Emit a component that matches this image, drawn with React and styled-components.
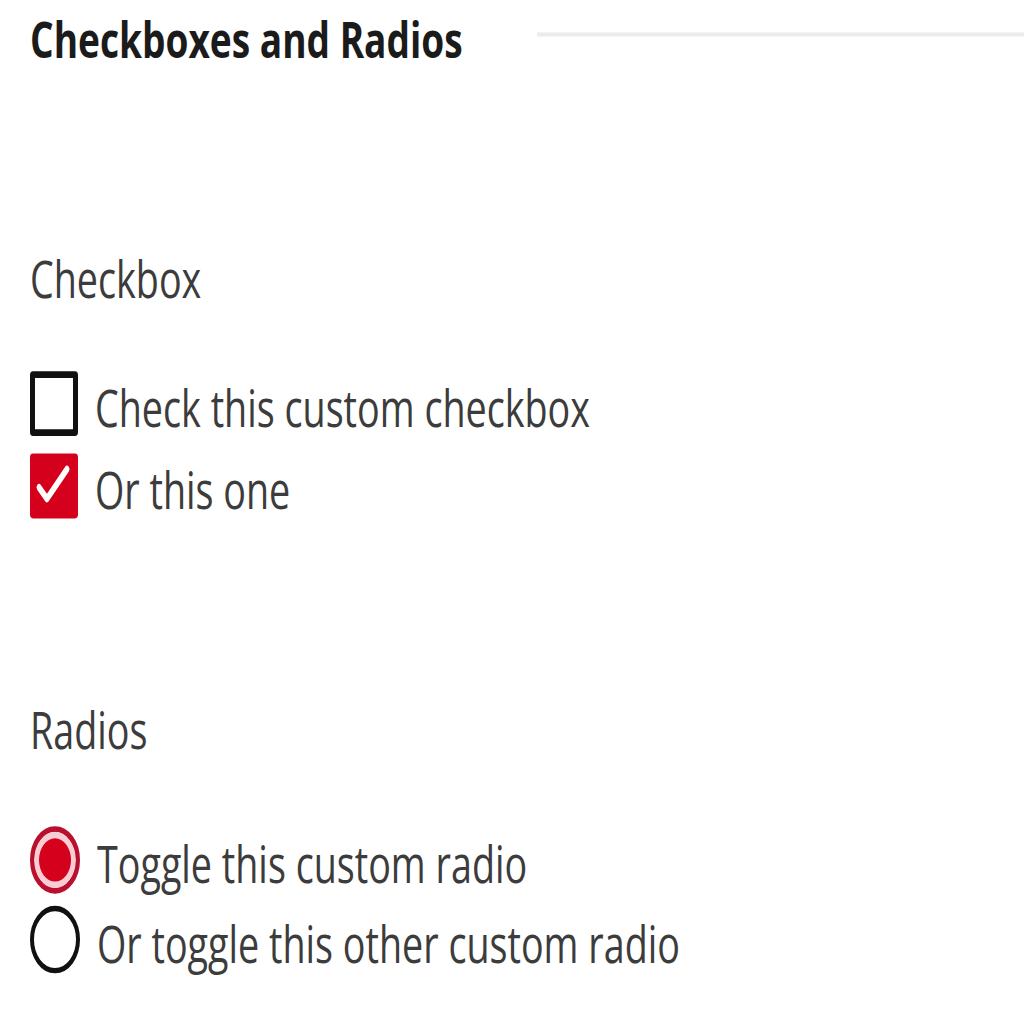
import React from "react";
import styled, { createGlobalStyle } from "styled-components";

const Global = createGlobalStyle`
  html, body {
    margin: 0;
    padding: 0;
    background: #ffffff;
  }
  body {
    min-height: 1024px;
  }
  * { box-sizing: border-box; }
`;

const RED = "#d5001c";

const Page = styled.div`
  width: 1024px;
  min-height: 760px;
  padding: 10px 0 0 30px;
  transform: scaleY(1.35);
  transform-origin: top left;
  font-family: "Open Sans", "Liberation Sans", sans-serif;
  display: flex;
  flex-direction: column;
`;

const Header = styled.div`
  display: flex;
  align-items: center;
`;

const Title = styled.h2`
  margin: 0;
  font-size: 37.1px;
  line-height: 1;
  font-weight: 700;
  color: #1b1b1b;
  white-space: nowrap;
`;

const Rule = styled.div`
  flex: 1;
  height: 3px;
  margin: 0 0 6px 74px;
  background: #ececec;
`;

const SectionLabel = styled.div`
  margin-top: ${(p) => p.$top}px;
  font-size: 37.7px;
  line-height: 1;
  color: #3c3c3c;
`;

const Options = styled.div`
  display: flex;
  flex-direction: column;
  gap: ${(p) => p.$gap}px;
  margin-top: ${(p) => p.$top}px;
`;

const Row = styled.label`
  display: flex;
  align-items: center;
  height: ${(p) => p.$h}px;
  gap: 17px;
`;

const Text = styled.span`
  font-size: 37.7px;
  line-height: 48px;
  padding-top: 6px;
  color: #3c3c3c;
  white-space: nowrap;
`;

const Box = styled.span`
  flex: none;
  width: 48px;
  height: 48px;
  border-radius: 3px;
  border: ${(p) => (p.$checked ? "none" : "5px solid #111")};
  background: ${(p) => (p.$checked ? RED : "#fff")};
  display: flex;
  align-items: center;
  justify-content: center;
`;

const Radio = styled.span`
  flex: none;
  width: 50px;
  height: 50px;
  border-radius: 50%;
  border: 4px solid ${(p) => (p.$checked ? "#b8102e" : "#111")};
  background: ${(p) => (p.$checked ? RED : "#fff")};
  box-shadow: ${(p) => (p.$checked ? "inset 0 0 0 5px #f9cdd4" : "none")};
`;

const Check = () => (
  <svg width="48" height="48" viewBox="0 0 48 48">
    <polyline
      points="9,25 17,33.5 37,11.5"
      fill="none"
      stroke="#fff"
      strokeWidth="5"
      strokeLinecap="round"
      strokeLinejoin="round"
    />
  </svg>
);

export default function App() {
  return (
    <>
      <Global />
      <Page>
        <Header>
          <Title>Checkboxes and Radios</Title>
          <Rule />
        </Header>

        <SectionLabel $top={141}>Checkbox</SectionLabel>
        <Options $top={49} $gap={13.5}>
          <Row $h={48}>
            <Box />
            <Text>Check this custom checkbox</Text>
          </Row>
          <Row $h={48}>
            <Box $checked>
              <Check />
            </Box>
            <Text>Or this one</Text>
          </Row>
        </Options>

        <SectionLabel $top={138}>Radios</SectionLabel>
        <Options $top={52} $gap={9}>
          <Row $h={50}>
            <Radio $checked />
            <Text>Toggle this custom radio</Text>
          </Row>
          <Row $h={50}>
            <Radio />
            <Text>Or toggle this other custom radio</Text>
          </Row>
        </Options>
      </Page>
    </>
  );
}
